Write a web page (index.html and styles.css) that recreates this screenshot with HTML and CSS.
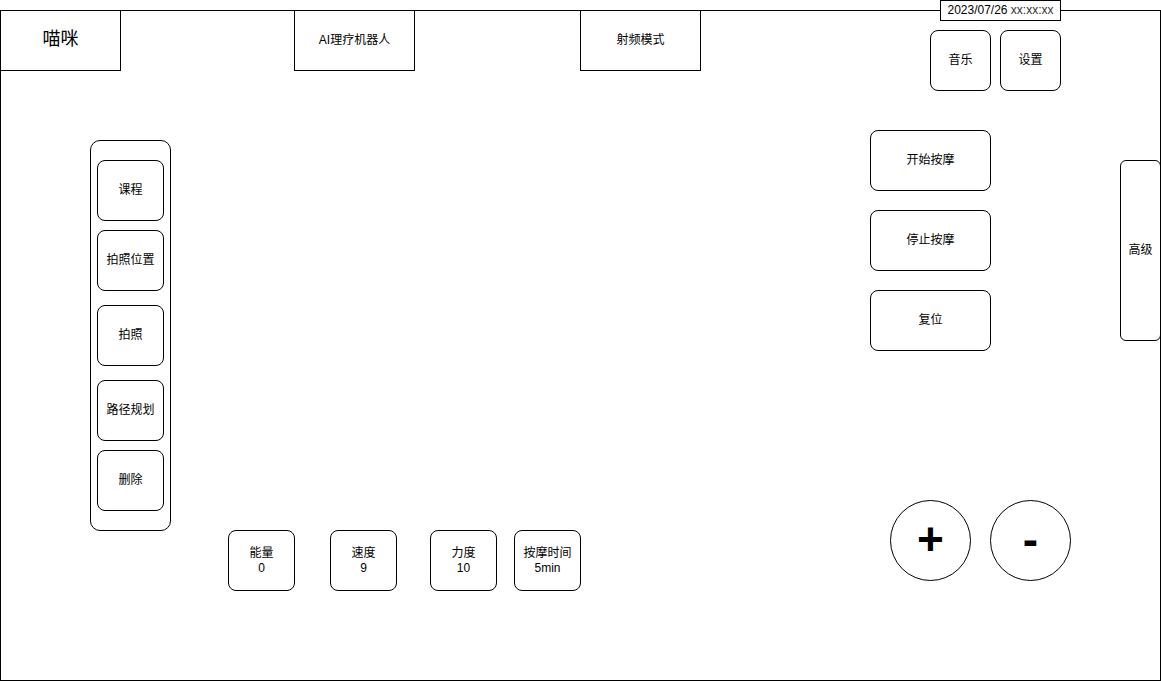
FILE: index.html
```html
<!DOCTYPE html>
<html lang="zh">
<head>
<meta charset="utf-8">
<title>喵咪</title>
<link rel="stylesheet" href="styles.css">
</head>
<body>
<div class="frame">
  <div class="datetime">2023/07/26 <span class="time">xx:xx:xx</span></div>
  <div class="topbar">
    <div class="tab tab-brand">喵咪</div>
    <div class="tab tab-ai">AI理疗机器人</div>
    <div class="tab tab-rf">射频模式</div>
    <div class="sq sq-music">音乐</div>
    <div class="sq sq-settings">设置</div>
  </div>
  <div class="main">
    <div class="col-left">
      <div class="panel">
        <div class="pbtn">课程</div>
        <div class="pbtn">拍照位置</div>
        <div class="pbtn">拍照</div>
        <div class="pbtn">路径规划</div>
        <div class="pbtn">删除</div>
      </div>
      <div class="stats">
        <div class="stat s-energy">能量<br>0</div>
        <div class="stat s-speed">速度<br>9</div>
        <div class="stat s-force">力度<br>10</div>
        <div class="stat s-time">按摩时间<br>5min</div>
      </div>
    </div>
    <div class="col-right">
      <div class="abtn">开始按摩</div>
      <div class="abtn">停止按摩</div>
      <div class="abtn">复位</div>
      <div class="circles">
        <div class="circle">+</div>
        <div class="circle circle-minus">-</div>
      </div>
    </div>
    <div class="advanced">高级</div>
  </div>
</div>
</body>
</html>
```
FILE: styles.css
```css
* { box-sizing: border-box; }
html, body { margin: 0; padding: 0; background: #fff; }
body {
  font-family: "Liberation Sans", "Noto Sans CJK SC", sans-serif;
  font-size: 12px;
  color: #000;
  width: 1161px;
  height: 681px;
  overflow: hidden;
}
.frame {
  position: relative;
  margin-top: 10px;
  width: 1161px;
  height: 671px;
  border: 1px solid #000;
}
.datetime {
  position: absolute;
  left: 939px;
  top: -11px;
  width: 121px;
  height: 21px;
  border: 1px solid #000;
  background: #fff;
  text-align: center;
  font-size: 12px;
  line-height: 18px;
  white-space: nowrap;
  z-index: 2;
}
.time { color: #333; }
.topbar {
  display: flex;
  align-items: flex-start;
  margin: -1px 0 0 -1px;
  height: 61px;
}
.tab, .sq, .pbtn, .abtn, .advanced {
  display: flex;
  align-items: center;
  justify-content: center;
  line-height: 14px;
  padding-bottom: 2px;
}
.tab {
  width: 121px;
  height: 61px;
  border: 1px solid #000;
  flex: none;
}
.tab-brand { font-size: 18px; line-height: 20px; padding-bottom: 3px; }
.tab-ai { margin-left: 173px; }
.tab-rf { margin-left: 165px; }
.sq {
  width: 61px;
  height: 61px;
  border: 1px solid #000;
  border-radius: 8px;
  margin-top: 20px;
  flex: none;
  background: #fff;
}
.sq-music { margin-left: 229px; }
.sq-settings { margin-left: 9px; }
.main {
  display: flex;
  align-items: flex-start;
  margin: 0 -1px;
}
.col-left {
  width: 870px;
  flex: none;
}
.panel {
  margin: 69px 0 0 90px;
  width: 81px;
  height: 391px;
  border: 1px solid #000;
  border-radius: 10px;
  padding: 19px 6px 0;
  display: flex;
  flex-direction: column;
}
.pbtn {
  width: 67px;
  height: 61px;
  border: 1px solid #000;
  border-radius: 8px;
  flex: none;
}
.pbtn:nth-child(2) { margin-top: 9px; }
.pbtn:nth-child(3) { margin-top: 14px; }
.pbtn:nth-child(4) { margin-top: 14px; }
.pbtn:nth-child(5) { margin-top: 9px; }
.stats {
  display: flex;
  margin-top: -1px;
}
.stat {
  width: 67px;
  height: 61px;
  border: 1px solid #000;
  border-radius: 8px;
  display: flex;
  align-items: center;
  justify-content: center;
  text-align: center;
  line-height: 15px;
  flex: none;
}
.s-energy { margin-left: 228px; }
.s-speed { margin-left: 35px; }
.s-force { margin-left: 33px; }
.s-time { margin-left: 17px; }
.col-right {
  width: 201px;
  flex: none;
  display: flex;
  flex-direction: column;
  align-items: flex-start;
  padding-top: 59px;
}
.abtn {
  width: 121px;
  height: 61px;
  border: 1px solid #000;
  border-radius: 8px;
}
.abtn + .abtn { margin-top: 19px; }
.circles {
  display: flex;
  gap: 19px;
  margin: 149px 0 0 20px;
}
.circle {
  width: 81px;
  height: 81px;
  border: 1px solid #000;
  border-radius: 50%;
  display: flex;
  align-items: center;
  justify-content: center;
  font-weight: bold;
  font-size: 46px;
  line-height: 1;
  padding-bottom: 3px;
}
.advanced {
  margin: 89px 0 0 49px;
  width: 41px;
  height: 181px;
  border: 1px solid #000;
  border-radius: 6px;
  flex: none;
}
```
